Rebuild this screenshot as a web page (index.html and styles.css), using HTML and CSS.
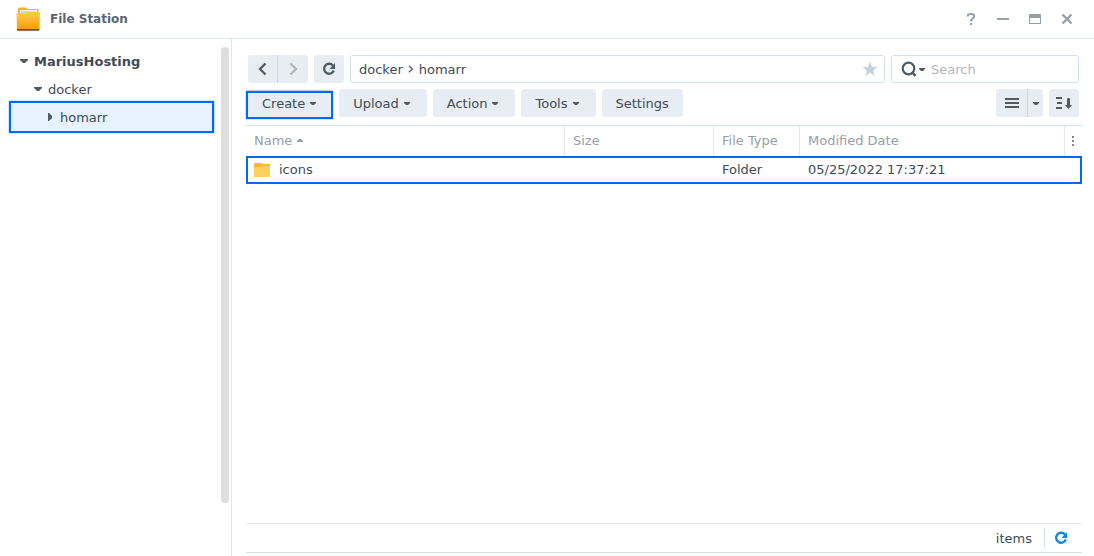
FILE: index.html
```html
<!DOCTYPE html>
<html lang="en">
<head>
<meta charset="utf-8">
<title>File Station</title>
<link rel="stylesheet" href="styles.css">
</head>
<body>
<div class="window">
  <header class="titlebar">
    <svg class="app-icon" width="24" height="24" viewBox="0 0 24 24" aria-hidden="true">
      <defs><linearGradient id="g" x1="0" y1="0" x2="0" y2="1"><stop offset="0" stop-color="#ffd04a"/><stop offset="1" stop-color="#fb9a0d"/></linearGradient></defs>
      <path d="M2 2q0-1.500 1.500-1.500H10L12 2h9.500q1 0 1 1v9H2z" fill="#f9b01c"/>
      <path d="M4 3h17v5H4z" fill="#fff"/><path d="M5 4.500h15v1H5z" fill="#7fc79a"/>
      <path d="M0.500 6H9l1.500-1H24L23.500 22H1z" fill="url(#g)"/>
      <path d="M1 22h22.500v.8q0 1-1 1H2q-1 0-1-1z" fill="#5b5147"/>
    </svg>
    <h1 class="title">File Station</h1>
    <div class="window-controls">
      <button class="plain" aria-label="Help"><svg width="14" height="14" viewBox="0 0 14 14"><path d="M3.800 4.500V3.800Q3.800 2 7 2t3.200 2.200q0 1.300-1.600 2.300T7 9.500M7 11v2" fill="none" stroke="#989ea6" stroke-width="2"/></svg></button>
      <button class="plain" aria-label="Minimize"><svg width="14" height="14" viewBox="0 0 14 14"><path d="M1 6h12v2H1z" fill="#989ea6"/></svg></button>
      <button class="plain" aria-label="Maximize"><svg width="14" height="14" viewBox="0 0 14 14"><path d="M2 2h10q1 0 1 1v9H1V3q0-1 1-1zm0 4v5h10V6z" fill="#989ea6" fill-rule="evenodd"/></svg></button>
      <button class="plain" aria-label="Close"><svg width="14" height="14" viewBox="0 0 14 14"><path d="M2.500 2.500l9 9M11.500 2.500l-9 9" stroke="#989ea6" stroke-width="2.300"/></svg></button>
    </div>
  </header>
  <div class="body">
    <aside class="sidebar">
      <ul class="tree">
        <li class="node root"><svg class="arrow" width="8" height="8" viewBox="0 0 8 8"><path d="M0 2h8v1L5 6H3L0 3z" fill="#505a64"/></svg><span class="label">MariusHosting</span></li>
        <li class="node level-1"><svg class="arrow" width="8" height="8" viewBox="0 0 8 8"><path d="M0 2h8v1L5 6H3L0 3z" fill="#505a64"/></svg><span class="label">docker</span></li>
        <li class="node level-2 selected"><svg class="arrow" width="8" height="8" viewBox="0 0 8 8"><path d="M2 0h1l3 3v2L3 8H2z" fill="#505a64"/></svg><span class="label">homarr</span></li>
      </ul>
      <div class="scrollbar"></div>
    </aside>
    <main class="content">
      <div class="toolbar">
        <div class="group">
          <button class="btn icon" aria-label="Back"><svg width="14" height="14" viewBox="0 0 14 14"><path d="M9.500 1.500L4 7l5.500 5.500" fill="none" stroke="#505a64" stroke-width="2.300"/></svg></button>
          <button class="btn icon" aria-label="Forward"><svg width="14" height="14" viewBox="0 0 14 14"><path d="M4.500 1.500L10 7l-5.500 5.500" fill="none" stroke="#b0b7c0" stroke-width="2.300"/></svg></button>
        </div>
        <button class="btn icon" aria-label="Refresh"><svg width="14" height="14" viewBox="0 0 14 14"><path d="M11 3.600A5 5 0 1 0 11.800 8.500" fill="none" stroke="#505a64" stroke-width="2.300"/><path d="M13 1v6H7.500z" fill="#505a64"/></svg></button>
        <nav class="path" aria-label="Path">
          <span class="label">docker</span>
          <svg class="crumb" width="6" height="8" viewBox="0 0 6 8"><path d="M1 .8L4.300 4 1 7.200" fill="none" stroke="#606972" stroke-width="1.500"/></svg>
          <span class="label">homarr</span>
          <button class="plain star" aria-label="Favorite"><svg width="16" height="16" viewBox="0 0 16 16"><path d="M8 .5l2 5.200 5.500.2-4.300 3.500 1.500 5.500L8 11.800l-4.700 3.100 1.500-5.500L.5 5.900l5.500-.2z" fill="#c5d0dc"/></svg></button>
        </nav>
        <label class="search">
          <svg width="25" height="16" viewBox="0 0 25 16"><circle cx="7.500" cy="7.500" r="5.800" fill="none" stroke="#505a64" stroke-width="2.200"/><path d="M11 11l3.500 4" stroke="#505a64" stroke-width="2.500"/><path d="M18 7h6v1l-2 2h-2l-2-2z" fill="#505a64"/></svg>
          <input type="text" placeholder="Search" aria-label="Search">
        </label>
      </div>
      <div class="toolbar">
        <button class="btn menu-btn marked"><span class="label">Create</span><svg width="6" height="3" viewBox="0 0 6 3"><path d="M0 0h6v1L4 3H2L0 1z" fill="#505a64"/></svg></button>
        <button class="btn menu-btn"><span class="label">Upload</span><svg width="6" height="3" viewBox="0 0 6 3"><path d="M0 0h6v1L4 3H2L0 1z" fill="#505a64"/></svg></button>
        <button class="btn menu-btn"><span class="label">Action</span><svg width="6" height="3" viewBox="0 0 6 3"><path d="M0 0h6v1L4 3H2L0 1z" fill="#505a64"/></svg></button>
        <button class="btn menu-btn"><span class="label">Tools</span><svg width="6" height="3" viewBox="0 0 6 3"><path d="M0 0h6v1L4 3H2L0 1z" fill="#505a64"/></svg></button>
        <button class="btn"><span class="label">Settings</span></button>
        <div class="group views">
          <button class="btn view" aria-label="List view"><svg width="14" height="12" viewBox="0 0 14 12"><path d="M0 1h14v2H0zM0 5h14v2H0zM0 9h14v2H0z" fill="#505a64"/></svg></button>
          <button class="btn more" aria-label="View options"><svg width="6" height="3" viewBox="0 0 6 3"><path d="M0 0h6v1L4 3H2L0 1z" fill="#505a64"/></svg></button>
        </div>
        <button class="btn icon" aria-label="Sort"><svg width="16" height="14" viewBox="0 0 16 14"><path d="M0 1h6v2H0zM1 6h5v2H1zM0 11h6v2H0zM11 3q0-1 1.500-1T14 3v6h2l-3.500 4L9 9h2z" fill="#505a64"/></svg></button>
      </div>
      <table class="files">
        <colgroup><col><col class="c-size"><col class="c-type"><col class="c-date"><col class="c-menu"></colgroup>
        <thead><tr>
          <th>Name<svg class="sort" width="6" height="3" viewBox="0 0 6 3"><path d="M0 3h6V2L4 0H2L0 2z" fill="#989ea6"/></svg></th>
          <th>Size</th><th>File Type</th><th>Modified Date</th>
          <th class="menu"><button class="plain" aria-label="Columns"><svg width="2" height="10" viewBox="0 0 2 10"><path d="M0 0h2v2H0zM0 4h2v2H0zM0 8h2v2H0z" fill="#80868e"/></svg></button></th>
        </tr></thead>
        <tbody><tr>
          <td><span class="file"><svg width="16" height="14" viewBox="0 0 16 14"><path d="M0 0h7l2 1h7v13H0z" fill="#fdb92e"/><path d="M0 4h7l1-1h8v11H0z" fill="#ffd15c"/></svg>icons</span></td>
          <td></td><td>Folder</td><td>05/25/2022 17:37:21</td><td></td>
        </tr></tbody>
      </table>
      <footer class="status">
        <span class="label">items</span>
        <button class="plain reload" aria-label="Reload"><svg width="14" height="14" viewBox="0 0 14 14"><path d="M11 3.600A5 5 0 1 0 11.800 8.500" fill="none" stroke="#0a84f0" stroke-width="2.300"/><path d="M13 1v6H7.500z" fill="#0a84f0"/></svg></button>
      </footer>
    </main>
  </div>
</div>
</body>
</html>
```
FILE: styles.css
```css
* { box-sizing: border-box; }
body {
  margin: 0;
  background: #fff;
  color: #414b55;
  font: 13px/28px Verdana, "DejaVu Sans", sans-serif;
}
svg { display: block; flex: none; }
button, input { font: inherit; color: inherit; }
.window { display: flex; flex-direction: column; min-height: 100vh; }
.titlebar {
  display: flex;
  align-items: center;
  gap: 10px;
  height: 39px;
  padding: 0 20px 0 16px;
  border-bottom: 1px solid #e1e7ee;
}
.title { margin: 0; font-size: 12px; font-weight: bold; line-height: 20px; color: #5b656f; }
.window-controls { display: flex; gap: 18px; margin-left: auto; }
.plain { display: flex; padding: 0; border: 0; background: none; }
.body { display: flex; flex: 1; }
.sidebar { display: flex; width: 232px; border-right: 1px solid #e3e5e7; }
.tree { flex: 1; margin: 0; padding: 8px 6px 0 9px; list-style: none; }
.node { display: flex; align-items: center; gap: 6px; height: 28px; }
.label { padding-top: 2px; line-height: 26px; }
.root { padding-left: 11px; font-weight: bold; }
.level-1 { padding-left: 25px; }
.level-2 { padding-left: 37px; }
.selected, .marked { position: relative; }
.selected { background: #e6f2ff; border-radius: 3px; }
.selected::after, .marked::after {
  content: "";
  position: absolute;
  border: 2px solid #0068ff;
  box-shadow: 0 0 1px #0068ff;
}
.selected::after { inset: -2px 1px -2px 0; background: none; }
.selected::before {
  content: "";
  position: absolute;
  inset: -2px 2px -2px 1px;
  background: #e6f2ff;
  z-index: -1;
}
.marked::after { inset: 2px 0 -2px -2px; }
.scrollbar { width: 8px; margin: 8px 2px 53px 0; border-radius: 4px; background: #dedede; }
.content { display: flex; flex: 1; flex-direction: column; min-width: 0; padding: 16px 12px 3px 14px; }
.toolbar { display: flex; gap: 6px; margin: 0 3px 6px 2px; }
.group { display: flex; }
.group .btn:first-child { border-radius: 3px 0 0 3px; border-right: 1px solid #cdd5de; }
.group .btn:last-child { border-radius: 0 3px 3px 0; }
.btn {
  display: flex;
  align-items: center;
  justify-content: center;
  gap: 5px;
  height: 28px;
  padding: 0 14px;
  border: 0;
  border-radius: 3px;
  background: #e8edf4;
}
.menu-btn { padding-right: 17px; }
.btn.icon { width: 30px; padding: 0; }
.btn.view { width: 32px; padding: 0; }
.btn.more { width: 15px; padding: 0; }
.views { margin-left: auto; }
.path, .search {
  display: flex;
  align-items: center;
  height: 28px;
  border: 1px solid #d3dfe9;
  border-radius: 3px;
}
.path { flex: 1; gap: 5px; padding: 0 6px 0 8px; }
.star { margin-left: auto; }
.search { width: 188px; gap: 5px; padding: 0 9px; }
.search input { flex: 1; min-width: 0; padding: 2px 0 0; border: 0; outline: 0; background: none; }
.search input::placeholder { color: #b3b7bb; opacity: 1; }
.files {
  width: 100%;
  margin-top: 2px;
  border-collapse: separate;
  border-spacing: 0;
  table-layout: fixed;
}
.c-size { width: 149px; }
.c-type { width: 86px; }
.c-date { width: 265px; }
.c-menu { width: 17px; }
.files th {
  height: 31px;
  padding: 0 8px;
  border-top: 1px solid #d3dfe9;
  border-right: 1px solid #e4e9ef;
  font-weight: normal;
  text-align: left;
  color: #989ea6;
}
.files th:last-child { border-right: 0; padding: 0 7px; }
.sort { display: inline-block; margin-left: 5px; vertical-align: 3px; }
.files td {
  height: 28px;
  padding: 0 8px;
  border: solid #0068ff;
  border-width: 2px 0;
  line-height: 24px;
}
.files td:first-child { border-left-width: 2px; padding-left: 6px; }
.files td:last-child { border-right-width: 2px; }
.file { display: flex; align-items: center; gap: 9px; }
.status {
  display: flex;
  align-items: center;
  justify-content: flex-end;
  gap: 12px;
  height: 30px;
  margin-top: auto;
  border-top: 1px solid #e4e9ef;
  border-bottom: 1px solid #d3dfe9;
}
.reload { align-items: center; height: 20px; margin-right: 14px; padding-left: 9px; border-left: 1px solid #d3dfe9; }
```
